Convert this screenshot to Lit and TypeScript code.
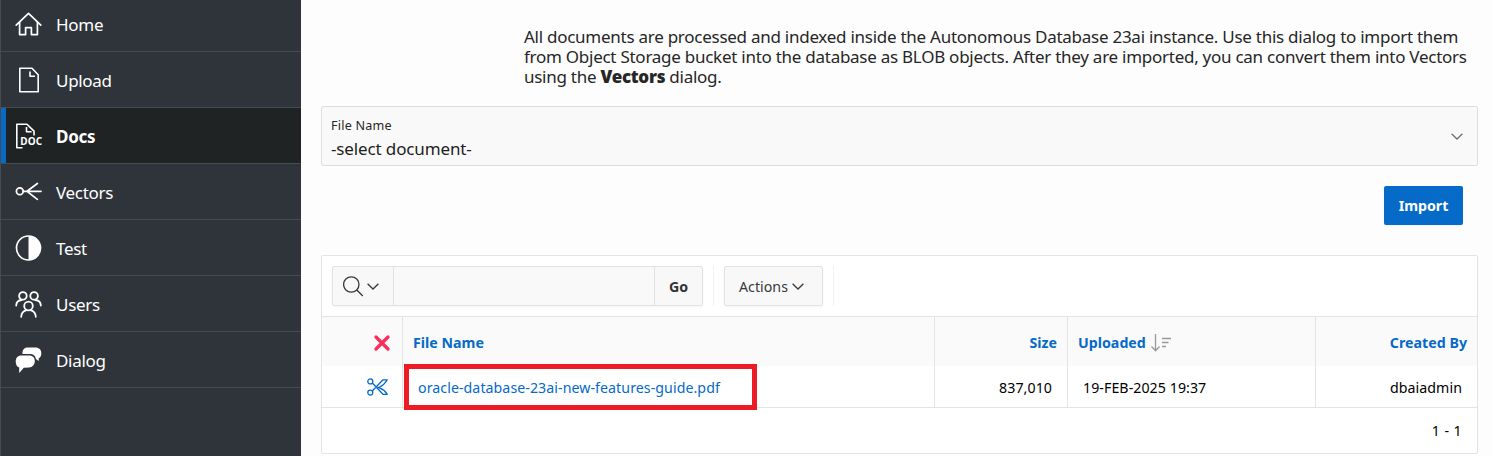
import { LitElement, html, css, svg } from "lit";
import { customElement } from "lit/decorators.js";
import { classMap } from "lit/directives/class-map.js";

const chevron = html`<svg class="chev" width="12" height="7" viewBox="0 0 12 7"><path d="M.6.8 6 6 11.4.8" fill="none" stroke="currentColor" stroke-width="1.3"/></svg>`;

const icons = {
  home: svg`<g fill="none" stroke="#fff" stroke-width="1.7" stroke-linejoin="round" stroke-linecap="round"><path d="M1.2 14.2 13.5 2.4 25.8 14.2"/><path d="M4.6 11.6V23.6H10.6V16.6H16.4V23.6H22.4V11.6"/></g>`,
  file: svg`<g fill="none" stroke="#fff" stroke-width="1.6" stroke-linejoin="round"><path d="M4.8 1.2H17L23.2 7.7V24.8H4.8Z"/><path d="M15 4.5V9.3H20"/></g>`,
  doc: svg`<g fill="none" stroke="#fff" stroke-width="1.6" stroke-linejoin="round"><path d="M7.5 24.8H1.8V1.2H12L19 8.1V12.5"/><path d="M11.5 4V8.8H16.6"/></g><text class="doc" x="5.2" y="22.3" textLength="22">DOC</text>`,
  vectors: svg`<g fill="none" stroke="#fff" stroke-width="1.7" stroke-linecap="round"><circle cx="4.8" cy="12.3" r="3.4"/><path d="M8.2 12.3H26M12 12.3 22.4 4.5M12 12.3 22.4 20.3"/></g>`,
  test: svg`<circle cx="13.5" cy="13" r="12" fill="none" stroke="#fff" stroke-width="1.7"/><path d="M13.5 1a12 12 0 0 1 0 24z" fill="#fff"/>`,
  users: svg`<g fill="none" stroke="#fff" stroke-width="1.8" stroke-linecap="round"><circle cx="7.9" cy="4.9" r="3.8"/><circle cx="19.1" cy="4.9" r="3.8"/><circle cx="13.5" cy="15" r="4.3"/><path d="M1.2 14.5C1.3 11.2 3.4 9.3 6.6 9M25.8 14.5C25.7 11.2 23.6 9.3 20.4 9M6.2 25.8C6.3 22.3 8.2 20.2 11 19.3M20.8 25.8C20.7 22.3 18.8 20.2 16 19.3"/></g>`,
  dialog: svg`<path d="M12.5 .5H20.5C24 .5 26.3 2.7 26.3 6.2C26.3 8.7 25.4 10.4 23.7 11.4V14L20.9 12C20.7 9 18.2 7 14.8 7H7.4C7.3 2.7 9.3 .5 12.5 .5Z" fill="#fff"/><path d="M6.3 8.4H14.3C17.7 8.4 19.8 10.6 19.8 14C19.8 17.7 17.5 20.1 13.9 20.6L8.8 20.7 4.2 26V20.6C2 19.7.7 17.4.7 14.4C.7 10.7 2.9 8.4 6.3 8.4Z" fill="#fff"/>`,
};

const nav: { id: keyof typeof icons; label: string }[] = [
  { id: "home", label: "Home" },
  { id: "file", label: "Upload" },
  { id: "doc", label: "Docs" },
  { id: "vectors", label: "Vectors" },
  { id: "test", label: "Test" },
  { id: "users", label: "Users" },
  { id: "dialog", label: "Dialog" },
];

@customElement("side-nav")
class SideNav extends LitElement {
  static styles = css`
    :host { display: block; box-sizing: border-box; width: 301px; flex: none; overflow: hidden;
      background: #2f343b; border-left: 1px solid #474a50; color: #fff; }
    .item { box-sizing: border-box; height: 56px; display: flex; align-items: center;
      border-bottom: 1px solid #474b50; padding: 1px 0 0 14px; font-size: 17px; line-height: 24px; letter-spacing: -0.3px; }
    .item span { padding-top: 2px; }
    .item:first-child { height: 52px; padding-top: 0; }
    .item:first-child span { padding-top: 0; margin-top: -2px; }
    .active { background: #1f2324; font-weight: 700; font-size: 17px; letter-spacing: -0.3px;
      box-shadow: inset 5px 0 #056ac8; }
    .icon { width: 27px; height: 27px; flex: none; margin-right: 14px; overflow: visible; }
    .item:first-child .icon { margin-top: -2px; }
    .doc { font: 700 10px "Noto Sans", sans-serif; letter-spacing: 0; fill: #fff; }
  `;
  render() {
    return nav.map((n) => html`<div class=${classMap({ item: true, active: n.id === "doc" })}>
      <svg class="icon" viewBox="0 0 27 27">${icons[n.id]}</svg><span>${n.label}</span></div>`);
  }
}

@customElement("doc-report")
class DocReport extends LitElement {
  static styles = css`
    :host { display: flex; flex-direction: column; box-sizing: border-box; height: 199px; margin-top: 30px;
      background: #fff; border: 1px solid #e4e4e4; border-radius: 2px; font-size: 14.2px; letter-spacing: 0.02px; color: #000; }
    .bar { height: 60px; box-sizing: border-box; padding: 10px; display: flex; }
    .search { display: flex; box-sizing: border-box; width: 371px; height: 40px; border: 1px solid #e1e1e1; border-radius: 2px;
      background: #f8f8f8; box-shadow: 0 1px 2px rgba(0,0,0,.04); }
    .lens { width: 60px; display: flex; align-items: center; padding-left: 10px; box-sizing: border-box; color: #393939; }
    .lens .chev { margin-left: 3px; margin-top: 1px; }
    .field { flex: 1; border: 1px solid #e1e1e1; border-width: 0 1px; background: #f9f9f9; }
    .go { width: 47px; display: grid; place-items: center; font-weight: 700; color: #333; }
    .sep { width: 1px; background: #f0f0f0; margin: 0 10px; }
    .actions { width: 99px; box-sizing: border-box; border: 1px solid #e1e1e1; border-radius: 2px; background: #f8f8f8;
      display: flex; align-items: center; padding-left: 14px; color: #393939; box-shadow: 0 1px 2px rgba(0,0,0,.04); }
    .actions .chev { margin-left: 4px; margin-top: 1px; }
    .row { display: grid; grid-template-columns: 81px 532px 133px 248px 1fr; border-top: 1px solid #e4e4e4; box-sizing: border-box; }
    .head { height: 50px; background: #fafafa; color: #056ac8; font-weight: 700; }
    .body { height: 41px; border-top: 0; border-bottom: 1px solid #e4e4e4; box-sizing: content-box; letter-spacing: 0.06px; }
    .cell { display: flex; align-items: center; border-right: 1px solid #e4e4e4; padding: 2px 10px 0; box-sizing: border-box; }
    .body .cell { padding: 1px 15px 0; }
    .body .cell:first-child { padding-right: 14px; }
    .cell:last-child { border-right: 0; }
    .end { justify-content: flex-end; }
    .link { color: #056ac8; position: relative; }
    .mark { position: absolute; left: 1px; top: -2px; width: 343px; height: 36px; border: 5px solid #ed1c24; }
    .foot { flex: 1; display: flex; align-items: center; justify-content: flex-end; padding-right: 15px; letter-spacing: .4px; }
    .sort { margin-left: 5px; }
  `;
  render() {
    return html`
      <div class="bar">
        <div class="search">
          <div class="lens"><svg width="21" height="21" viewBox="0 0 21 21"><g fill="none" stroke="#393939" stroke-width="1.3"><circle cx="8.3" cy="8.5" r="7.7"/><path d="M13.8 14 19.8 20"/></g></svg>${chevron}</div>
          <div class="field"></div><div class="go">Go</div>
        </div>
        <div class="sep"></div>
        <div class="actions">Actions${chevron}</div>
        <div class="sep"></div>
      </div>
      <div class="row head">
        <div class="cell end"><svg width="20" height="20" viewBox="0 0 20 20"><path d="M4 4 16 16M16 4 4 16" stroke="#fa2d5d" stroke-width="3.3" stroke-linecap="round"/></svg></div>
        <div class="cell">File Name</div>
        <div class="cell end">Size</div>
        <div class="cell">Uploaded<svg class="sort" width="21" height="18" viewBox="0 0 21 18"><g fill="none" stroke="#999" stroke-width="1.3"><path d="M4.5 0V16.5M.5 12.5 4.5 16.8 8.5 12.5"/><path d="M11 4.5H20M11 8.5H17.5M11 12.5H15"/></g></svg></div>
        <div class="cell end">Created By</div>
      </div>
      <div class="row body">
        <div class="cell end"><svg width="21" height="18" viewBox="0 0 21 18"><g fill="none" stroke="#056ac8" stroke-width="1.3" stroke-linejoin="round"><circle cx="3.3" cy="3.4" r="2.5"/><circle cx="3.3" cy="14.6" r="2.5"/><path d="M5.3 5 16 16.3H20.3C18.5 13.3 16.5 11.5 12.8 10.2L10.5 9M5.3 13 16 1.8H20.3C18.5 5 16 7.5 12 9.5"/></g></svg></div>
        <div class="cell link"><span>oracle-database-23ai-new-features-guide.pdf</span><div class="mark"></div></div>
        <div class="cell end">837,010</div>
        <div class="cell">19-FEB-2025 19:37</div>
        <div class="cell end">dbaiadmin</div>
      </div>
      <div class="foot">1 - 1</div>`;
  }
}

@customElement("app-root")
class AppRoot extends LitElement {
  static styles = css`
    :host { display: flex; height: 456px; overflow: hidden; background: #fdfdfd; font-family: "Noto Sans", sans-serif; color: #262626; }
    .main { flex: 1; padding: 27px 15px 0 20px; display: flex; flex-direction: column; }
    .intro { margin: 0 0 0 203px; height: 79px; font-size: 17px; line-height: 20px; letter-spacing: -0.262px; white-space: nowrap; }
    .line { display: block; }
    .strong { font-weight: 900; }
    .select { box-sizing: border-box; height: 60px; border: 1px solid #dfdfdf; border-radius: 2px; background: #f9f9f9;
      display: flex; align-items: center; justify-content: space-between; padding: 0 14px 0 9px; }
    .texts { display: flex; flex-direction: column; padding-top: 8px; }
    .label { font-size: 12.6px; line-height: 18px; letter-spacing: 0.22px; }
    .value { font-size: 17px; line-height: 28px; letter-spacing: -0.13px; color: #1e1e1e; }
    .select .chev { color: #707070; }
    .import { align-self: flex-end; margin: 20px 15px 0 0; width: 79px; height: 39px; display: grid; place-items: center;
      background: #056ac8; color: #fff; border-radius: 2px; font-weight: 700; font-size: 14.2px; line-height: 19px; padding-bottom: 1px; box-sizing: border-box;
      box-shadow: 0 1px 2px rgba(0,0,0,.06); }
  `;
  render() {
    return html`
      <side-nav></side-nav>
      <div class="main">
        <p class="intro">
          <span class="line">All documents are processed and indexed inside the Autonomous Database 23ai instance. Use this dialog to import them</span>
          <span class="line">from Object Storage bucket into the database as BLOB objects. After they are imported, you can convert them into Vectors</span>
          <span class="line">using the <b class="strong">Vectors</b> dialog.</span>
        </p>
        <div class="select">
          <div class="texts"><span class="label">File Name</span><span class="value">-select document-</span></div>
          ${chevron}
        </div>
        <div class="import">Import</div>
        <doc-report></doc-report>
      </div>`;
  }
}
